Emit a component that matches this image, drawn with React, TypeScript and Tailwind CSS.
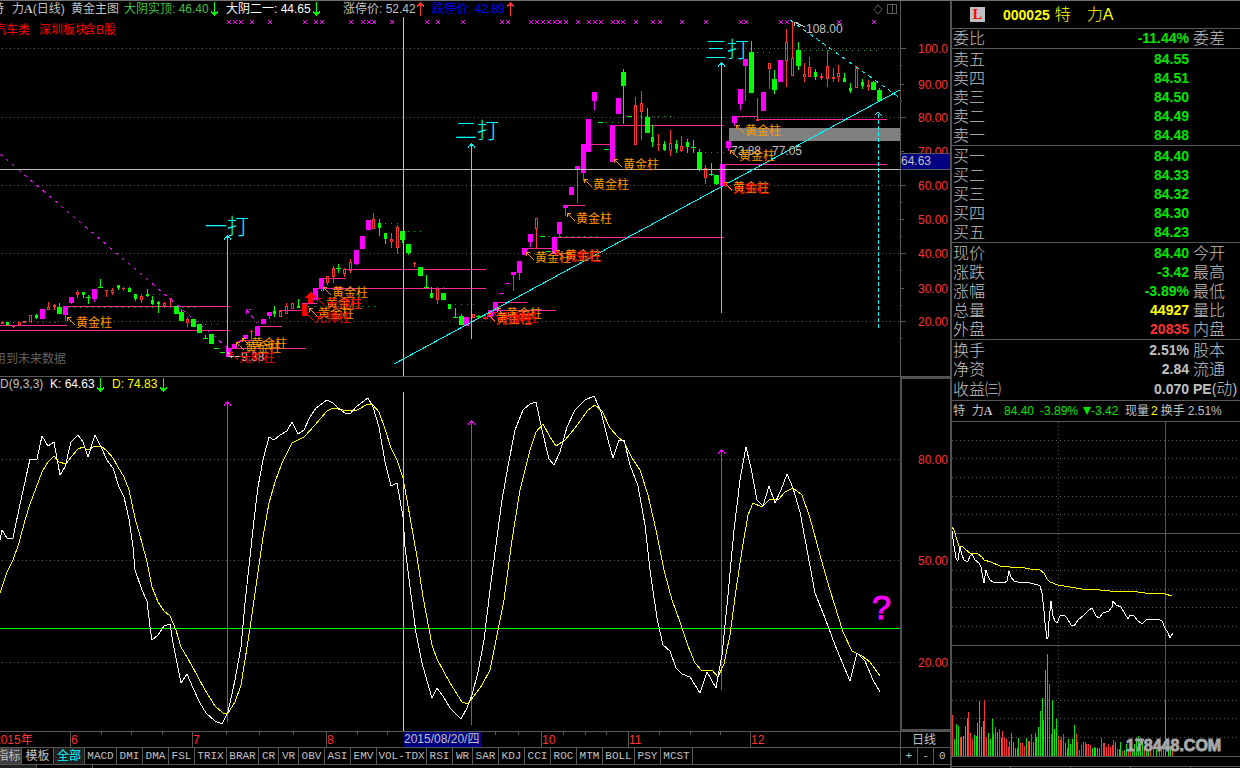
import { clsx } from "clsx";

type Kind = "up" | "down" | "gold" | "solid";
// x, high, body top, body bottom, low, kind
type Candle = [number, number, number, number, number, Kind];

const CANDLES: Candle[] = [
  [2, 322, 322, 324, 324, "up"],
  [7, 322, 322, 325, 325, "down"],
  [13, 325, 326, 327, 328, "up"],
  [19, 322, 322, 325, 325, "up"],
  [24, 321, 321, 323, 323, "up"],
  [30, 315, 315, 322, 322, "up"],
  [36, 314, 315, 318, 319, "down"],
  [42, 309, 309, 319, 319, "gold"],
  [48, 302, 307, 310, 310, "up"],
  [54, 304, 305, 307, 310, "up"],
  [59, 303, 307, 314, 314, "down"],
  [65, 306, 306, 315, 321, "gold"],
  [71, 297, 297, 303, 304, "gold"],
  [77, 290, 292, 295, 298, "up"],
  [83, 292, 292, 295, 298, "down"],
  [88, 295, 297, 298, 304, "down"],
  [94, 289, 289, 299, 302, "gold"],
  [100, 279, 287, 288, 288, "down"],
  [106, 290, 290, 291, 297, "up"],
  [112, 288, 290, 293, 295, "up"],
  [118, 285, 285, 288, 290, "down"],
  [123, 287, 288, 289, 291, "up"],
  [129, 287, 288, 292, 292, "down"],
  [135, 294, 294, 299, 301, "down"],
  [141, 295, 296, 300, 303, "up"],
  [147, 289, 294, 296, 297, "down"],
  [152, 296, 300, 304, 305, "down"],
  [158, 301, 302, 304, 313, "down"],
  [164, 302, 303, 306, 307, "up"],
  [170, 298, 298, 299, 306, "up"],
  [176, 306, 306, 314, 314, "down"],
  [181, 309, 312, 321, 321, "down"],
  [187, 317, 319, 323, 327, "up"],
  [193, 319, 319, 327, 327, "down"],
  [199, 324, 324, 333, 333, "down"],
  [205, 335, 338, 339, 339, "down"],
  [211, 334, 334, 344, 344, "down"],
  [216, 348, 348, 349, 349, "down"],
  [222, 352, 352, 353, 353, "down"],
  [228, 348, 348, 357, 357, "gold"],
  [234, 344, 344, 348, 348, "gold"],
  [240, 341, 341, 342, 342, "gold"],
  [245, 335, 335, 339, 339, "gold"],
  [251, 330, 331, 332, 340, "up"],
  [257, 326, 326, 336, 336, "gold"],
  [263, 319, 319, 324, 324, "gold"],
  [269, 312, 312, 316, 319, "gold"],
  [274, 306, 311, 314, 317, "down"],
  [280, 310, 311, 317, 317, "up"],
  [286, 303, 306, 314, 314, "up"],
  [292, 303, 303, 309, 309, "up"],
  [298, 299, 306, 308, 308, "down"],
  [304, 304, 304, 316, 316, "solid"],
  [315, 288, 288, 300, 300, "gold"],
  [321, 278, 278, 289, 291, "gold"],
  [327, 276, 276, 283, 285, "up"],
  [333, 266, 268, 277, 283, "up"],
  [338, 264, 268, 269, 273, "down"],
  [344, 268, 269, 274, 277, "up"],
  [350, 259, 262, 271, 273, "up"],
  [356, 250, 250, 264, 265, "gold"],
  [362, 236, 236, 249, 249, "gold"],
  [368, 220, 220, 230, 230, "gold"],
  [373, 213, 219, 229, 229, "up"],
  [379, 219, 223, 228, 236, "down"],
  [385, 233, 233, 239, 244, "down"],
  [391, 233, 239, 242, 248, "up"],
  [397, 225, 227, 248, 254, "up"],
  [402, 231, 231, 240, 243, "down"],
  [408, 244, 244, 253, 255, "down"],
  [414, 262, 263, 264, 267, "up"],
  [420, 267, 267, 276, 276, "down"],
  [426, 275, 287, 288, 288, "down"],
  [431, 287, 293, 298, 298, "down"],
  [437, 287, 289, 300, 304, "up"],
  [443, 293, 293, 300, 300, "down"],
  [449, 304, 304, 309, 309, "down"],
  [455, 308, 317, 318, 318, "down"],
  [461, 314, 316, 325, 325, "down"],
  [466, 317, 317, 326, 326, "gold"],
  [473, 314, 314, 318, 318, "up"],
  [478, 315, 316, 317, 319, "down"],
  [485, 314, 317, 319, 320, "solid"],
  [490, 310, 310, 317, 317, "gold"],
  [495, 302, 302, 311, 311, "gold"],
  [501, 293, 293, 294, 295, "gold"],
  [507, 283, 283, 284, 284, "gold"],
  [513, 272, 272, 275, 291, "gold"],
  [519, 261, 261, 273, 280, "gold"],
  [524, 248, 248, 255, 255, "gold"],
  [530, 234, 234, 242, 247, "gold"],
  [536, 218, 218, 229, 249, "up"],
  [542, 236, 236, 237, 237, "down"],
  [548, 251, 251, 252, 252, "down"],
  [554, 237, 237, 254, 254, "gold"],
  [559, 222, 222, 234, 237, "gold"],
  [565, 205, 205, 208, 216, "gold"],
  [571, 187, 187, 195, 195, "gold"],
  [577, 166, 166, 169, 203, "gold"],
  [583, 144, 144, 173, 181, "gold"],
  [588, 119, 119, 152, 152, "gold"],
  [594, 92, 92, 101, 110, "gold"],
  [600, 122, 122, 123, 123, "down"],
  [606, 149, 149, 150, 150, "down"],
  [612, 125, 125, 162, 162, "gold"],
  [618, 98, 98, 114, 114, "gold"],
  [623, 69, 72, 86, 124, "down"],
  [629, 116, 116, 117, 117, "down"],
  [635, 97, 105, 145, 145, "up"],
  [641, 91, 103, 112, 140, "up"],
  [647, 108, 117, 133, 133, "down"],
  [652, 125, 137, 142, 147, "down"],
  [658, 134, 144, 145, 151, "up"],
  [664, 141, 144, 150, 151, "down"],
  [670, 130, 143, 151, 156, "up"],
  [676, 140, 144, 149, 153, "down"],
  [681, 136, 146, 151, 152, "up"],
  [687, 139, 142, 147, 153, "down"],
  [693, 140, 147, 148, 153, "down"],
  [699, 149, 152, 170, 171, "down"],
  [705, 165, 168, 178, 184, "up"],
  [711, 163, 174, 175, 176, "down"],
  [716, 175, 175, 184, 185, "down"],
  [722, 164, 164, 186, 186, "gold"],
  [728, 141, 141, 148, 151, "gold"],
  [734, 116, 116, 123, 126, "gold"],
  [740, 89, 89, 104, 110, "gold"],
  [745, 59, 59, 66, 101, "gold"],
  [751, 41, 52, 93, 93, "down"],
  [757, 98, 119, 121, 121, "up"],
  [763, 92, 92, 111, 111, "gold"],
  [769, 63, 63, 69, 89, "up"],
  [774, 70, 79, 90, 94, "down"],
  [780, 60, 60, 82, 82, "gold"],
  [786, 29, 42, 61, 87, "up"],
  [792, 22, 58, 76, 76, "up"],
  [798, 42, 50, 66, 70, "down"],
  [804, 63, 74, 77, 82, "up"],
  [809, 57, 67, 77, 77, "up"],
  [815, 69, 72, 77, 80, "down"],
  [821, 73, 76, 78, 80, "up"],
  [827, 50, 66, 79, 87, "up"],
  [833, 68, 77, 79, 82, "up"],
  [838, 65, 73, 77, 82, "up"],
  [844, 73, 78, 82, 82, "down"],
  [850, 83, 88, 91, 93, "down"],
  [856, 66, 68, 88, 88, "up"],
  [862, 79, 82, 86, 89, "down"],
  [868, 80, 85, 87, 91, "up"],
  [873, 81, 82, 90, 90, "down"],
  [879, 88, 90, 101, 102, "down"],
];

// y, x from, x to
const GOLD_LEVELS = [
  [306, 65, 230], [325, 0, 67], [330, 0, 230], [348, 228, 306], [326, 257, 282],
  [310, 279, 302], [303, 302, 317], [340, 240, 262], [278, 321, 346],
  [288, 315, 486], [269, 344, 486], [248, 524, 554], [237, 554, 724],
  [205, 565, 585], [302, 495, 527], [310, 490, 556], [144, 588, 612],
  [125, 612, 724], [116, 734, 758], [119, 757, 887], [164, 722, 887],
];

const GREEN_LEVELS = [
  [307, 68, 195], [322, 7, 56], [294, 141, 172], [324, 199, 218], [223, 385, 400],
  [231, 408, 422], [306, 308, 376], [287, 431, 445], [304, 455, 474],
  [236, 548, 598], [116, 640, 672], [122, 606, 620], [152, 705, 725],
  [52, 757, 771], [50, 804, 882],
];

const CROSS_MARKS = [
  229, 235, 241, 252, 270, 305, 316, 322, 351, 363, 369, 374, 392, 427, 438,
  463, 502, 508, 531, 537, 543, 549, 555, 560, 566, 578, 589, 595, 601, 613,
  618, 623, 636, 653, 660, 682, 706, 741, 746, 781, 787, 839, 874,
];

const GOLD_LABELS = [
  [77, 322], [252, 343], [246, 347], [333, 292], [327, 303], [319, 313],
  [507, 313], [497, 318], [536, 257], [566, 255], [577, 218], [594, 184],
  [624, 164], [746, 130], [740, 155], [734, 187],
];

const MARSHAL_LABELS = [
  [240, 357], [327, 303], [315, 317], [497, 319], [503, 317], [566, 256], [734, 188],
];

const PRICE_TICKS: [string, number][] = [
  ["100.0", 48], ["90.00", 84], ["80.00", 117], ["70.00", 151], ["60.00", 185],
  ["50.00", 219], ["40.00", 253], ["30.00", 288], ["20.00", 321],
];

const K_LINE =
  "0,540 2,530 7,538 13,538 19,509 30,459 37,459 42,436 48,446 54,442 60,475 65,467 71,442 78,435 83,442 88,457 95,435 101,447 107,460 113,468 119,487 124,497 129,519 133,547 135,570 142,590 147,601 150,627 152,640 158,635 164,626 170,624 173,643 181,683 187,674 193,688 200,703 206,713 215,721 222,724 228,712 235,680 241,647 245,603 250,557 254,520 258,487 263,460 269,437 274,440 280,435 287,431 292,422 298,434 304,430 310,417 316,408 327,400 333,403 338,408 345,413 350,414 357,406 368,398 373,407 379,427 385,462 391,486 397,483 403,517 405,547 410,587 416,633 422,663 432,698 437,688 443,696 450,708 461,719 467,708 472,695 478,672 484,640 490,590 496,545 502,500 508,466 515,430 523,410 530,404 536,402 542,430 549,459 554,465 560,452 567,427 575,410 585,400 594,396 601,412 608,440 613,458 619,440 624,440 630,465 638,486 645,525 650,570 657,618 663,645 670,651 676,668 682,674 690,677 700,693 707,672 716,688 722,655 728,595 734,530 740,480 746,447 751,468 757,500 763,506 769,486 775,503 781,490 787,474 793,488 800,512 808,555 815,593 825,618 835,645 850,681 857,653 865,661 873,680 880,692";

const D_LINE =
  "0,593 7,572 13,560 19,543 25,520 30,504 42,472 48,462 54,456 59,462 66,464 72,456 78,449 83,447 88,450 95,446 101,446 107,451 113,458 118,467 124,477 129,490 135,518 142,543 147,562 152,587 158,602 164,611 170,616 176,630 181,647 187,657 197,675 205,690 215,706 223,713 228,713 235,702 241,685 245,660 250,628 254,600 259,565 263,537 269,503 275,482 282,463 292,443 304,437 315,425 327,411 333,408 348,411 357,410 368,404 373,405 379,412 385,429 391,448 397,460 403,478 410,517 417,557 423,597 432,645 437,659 450,683 462,702 468,704 474,696 482,685 490,670 496,640 504,600 512,540 520,490 530,450 536,432 543,424 550,437 556,446 565,440 575,428 588,410 595,405 602,411 610,428 618,437 624,442 632,458 640,470 648,495 656,530 664,570 672,600 680,622 688,646 695,663 702,671 712,670 718,677 724,664 730,635 736,590 742,550 748,515 753,503 762,507 770,499 778,500 785,492 793,488 802,495 810,518 820,555 830,590 843,632 852,651 862,656 870,662 880,676";

const TICK_LINE =
  "952,530 954,545 956,557 957,559 958,559 960,546 962,554 964,559 966,560 968,560 970,555 972,553 975,559 979,562 981,566 983,577 984,582 986,569 988,575 990,579 993,581 1004,582 1007,580 1009,570 1011,576 1014,580 1018,581 1030,582 1038,584 1040,585 1042,592 1044,610 1045,622 1047,638 1048,636 1049,620 1051,600 1053,615 1055,620 1057,622 1060,615 1064,614 1067,617 1071,624 1074,625 1078,619 1084,614 1088,610 1092,607 1096,615 1099,617 1103,612 1109,610 1112,606 1113,600 1116,604 1121,606 1125,613 1128,618 1130,614 1134,615 1138,620 1142,623 1147,618 1158,618 1162,620 1165,627 1168,632 1170,637 1173,632";

const AVG_LINE =
  "952,526 954,529 957,539 959,545 963,546 966,549 970,552 978,553 982,556 984,559 991,561 1000,565 1010,566 1020,566 1030,568 1040,569 1044,572 1047,578 1050,581 1058,584 1070,586 1082,588 1100,589 1110,590 1130,590 1145,592 1165,593 1172,595";

// x, height, r = buy side, g = sell side
const VOLUMES: [number, number, "r" | "g"][] = [
  [952, 41, "r"], [954, 17, "g"], [956, 32, "g"], [958, 30, "g"], [960, 19, "r"],
  [961, 19, "g"], [963, 20, "g"], [965, 30, "g"], [967, 38, "g"], [968, 44, "r"],
  [970, 23, "r"], [972, 17, "r"], [974, 21, "g"], [976, 20, "g"], [977, 33, "g"],
  [979, 55, "g"], [981, 29, "g"], [983, 35, "g"], [984, 56, "r"], [986, 19, "r"],
  [988, 23, "g"], [990, 17, "g"], [992, 37, "g"], [993, 22, "g"], [995, 29, "r"],
  [997, 24, "g"], [999, 27, "r"], [1001, 18, "g"], [1002, 25, "r"], [1004, 19, "r"],
  [1006, 17, "r"], [1008, 9, "r"], [1009, 15, "r"], [1011, 23, "g"], [1013, 14, "g"],
  [1015, 8, "g"], [1017, 8, "g"], [1018, 18, "g"], [1020, 13, "r"], [1022, 13, "r"],
  [1024, 10, "r"], [1026, 18, "g"], [1028, 15, "r"], [1029, 15, "g"], [1031, 22, "r"],
  [1033, 14, "g"], [1035, 23, "g"], [1036, 19, "g"], [1038, 29, "g"], [1040, 45, "g"],
  [1042, 58, "g"], [1043, 36, "g"], [1045, 86, "g"], [1047, 102, "g"], [1049, 72, "r"],
  [1051, 22, "r"], [1052, 56, "g"], [1054, 27, "g"], [1056, 37, "g"], [1058, 20, "r"],
  [1060, 16, "r"], [1061, 19, "r"], [1063, 22, "r"], [1065, 13, "g"], [1067, 8, "g"],
  [1068, 17, "g"], [1070, 12, "g"], [1072, 17, "g"], [1074, 31, "g"], [1076, 22, "r"],
  [1077, 14, "r"], [1079, 6, "r"], [1081, 11, "r"], [1083, 14, "r"], [1085, 14, "r"],
  [1086, 12, "r"], [1088, 12, "r"], [1090, 11, "r"], [1092, 8, "g"], [1094, 9, "g"],
  [1095, 8, "g"], [1097, 8, "g"], [1099, 8, "g"], [1101, 18, "r"], [1103, 13, "r"],
  [1104, 13, "r"], [1106, 9, "r"], [1108, 12, "r"], [1110, 9, "r"], [1112, 11, "r"],
  [1113, 16, "r"], [1115, 14, "g"], [1117, 7, "r"], [1119, 7, "g"], [1120, 14, "g"],
  [1122, 5, "r"], [1124, 6, "g"], [1126, 12, "g"], [1128, 7, "r"], [1130, 5, "r"],
  [1132, 8, "g"], [1134, 12, "g"], [1136, 18, "g"], [1138, 20, "g"], [1140, 14, "g"],
  [1142, 16, "g"], [1144, 9, "r"], [1146, 10, "g"], [1148, 6, "g"], [1150, 8, "r"],
  [1153, 7, "r"], [1156, 6, "g"], [1159, 9, "r"], [1161, 10, "r"], [1163, 8, "r"],
  [1165, 56, "g"], [1168, 8, "g"], [1170, 10, "g"], [1172, 5, "r"],
];

interface Quote {
  label: string;
  value: string;
  color: string;
  side?: string;
}

const GREEN = "text-[#00e600]";
const SILVER = "text-[#c0c0c0]";

const QUOTE_GROUPS: Quote[][] = [
  [{ label: "委比", value: "-11.44%", color: GREEN, side: "委差" }],
  [
    { label: "卖五", value: "84.55", color: GREEN },
    { label: "卖四", value: "84.51", color: GREEN },
    { label: "卖三", value: "84.50", color: GREEN },
    { label: "卖二", value: "84.49", color: GREEN },
    { label: "卖一", value: "84.48", color: GREEN },
  ],
  [
    { label: "买一", value: "84.40", color: GREEN },
    { label: "买二", value: "84.33", color: GREEN },
    { label: "买三", value: "84.32", color: GREEN },
    { label: "买四", value: "84.30", color: GREEN },
    { label: "买五", value: "84.23", color: GREEN },
  ],
  [
    { label: "现价", value: "84.40", color: GREEN, side: "今开" },
    { label: "涨跌", value: "-3.42", color: GREEN, side: "最高" },
    { label: "涨幅", value: "-3.89%", color: GREEN, side: "最低" },
    { label: "总量", value: "44927", color: "text-[#ffff00]", side: "量比" },
    { label: "外盘", value: "20835", color: "text-[#ff3232]", side: "内盘" },
  ],
  [
    { label: "换手", value: "2.51%", color: SILVER, side: "股本" },
    { label: "净资", value: "2.84", color: SILVER, side: "流通" },
    { label: "收益㈢", value: "0.070", color: SILVER, side: "PE(动)" },
  ],
];

const TABS = [
  "MACD", "DMI", "DMA", "FSL", "TRIX", "BRAR", "CR", "VR", "OBV", "ASI", "EMV",
  "VOL-TDX", "RSI", "WR", "SAR", "KDJ", "CCI", "ROC", "MTM", "BOLL", "PSY", "MCST",
];

const TAB_WIDTH: Record<number, string> = {
  2: "w-5",
  3: "w-[26px]",
  4: "w-8",
  7: "w-[50px]",
};

function Arrow({ up, className }: { up?: boolean; className: string }) {
  return (
    <svg
      viewBox="0 0 7 14"
      shapeRendering="crispEdges"
      className={clsx("h-[14px] w-[7px] shrink-0 fill-current", className)}
    >
      {up ? (
        <path d="M3 0h1v1h1v1h1v1h1v2h-1v-1h-2v10h-1v-10h-2v1h-1v-2h1v-1h1v-1h1z" />
      ) : (
        <path d="M3 0h1v10h2v-1h1v2h-1v1h-1v1h-1v1h-1v-1h-1v-1h-1v-1h-1v-2h1v1h2z" />
      )}
    </svg>
  );
}

function CandleBar({ candle }: { candle: Candle }) {
  const [x, high, top, bottom, low, kind] = candle;
  const height = Math.max(bottom - top, 1);
  if (kind === "up") {
    return (
      <g fill="#ff3232">
        <rect x={x} y={high} width={1} height={Math.max(top - high, 0)} />
        <rect x={x} y={bottom} width={1} height={Math.max(low - bottom, 0)} />
        <path
          fillRule="evenodd"
          d={
            height > 2
              ? `M${x - 1} ${top}h3v${height}h-3z M${x} ${top + 1}h1v${height - 2}h-1z`
              : `M${x - 1} ${top}h3v${height}h-3z`
          }
        />
      </g>
    );
  }
  const color = { gold: "#ff00ff", down: "#00ff00", solid: "#ff0000" }[kind];
  const half = kind === "down" && height < 7 && height > 1 ? 1 : 2;
  return (
    <g fill={color}>
      <rect x={x} y={high} width={1} height={low - high} />
      <rect x={x - half} y={top} width={half * 2 + 1} height={height} />
    </g>
  );
}

function Pointer({ x, y, color }: { x: number; y: number; color: string }) {
  return (
    <path
      d={`M${x - 2} ${y + 3}L${x - 10} ${y - 5}M${x - 10} ${y - 1}V${y - 5}H${x - 6}`}
      stroke={color}
      fill="none"
    />
  );
}

function UpMarker({ x, top, bottom, color }: { x: number; top: number; bottom: number; color: string }) {
  return (
    <g fill={color}>
      <rect x={x} y={top} width={1} height={bottom - top} />
      <rect x={x - 1} y={top + 1} width={3} height={1} />
      <path
        d={`M${x - 2} ${top + 2}h2v1h-2z M${x + 1} ${top + 2}h2v1h-2z M${x - 3} ${top + 3}h1v2h-1z M${x + 3} ${top + 3}h1v2h-1z`}
      />
    </g>
  );
}

function PriceChart() {
  return (
    <svg viewBox="0 17 950 360" className="block h-auto w-full" shapeRendering="crispEdges">
      <g stroke="#585858" strokeDasharray="1 3">
        {[48, 117, 185, 253, 321].map((y) => (
          <path key={y} d={`M2 ${y}H900`} />
        ))}
      </g>

      {/* gap zone */}
      <rect x={729} y={128} width={171} height={13} fill="#808080" />

      <g stroke="#ff2890">
        {GOLD_LEVELS.map(([y, from, to]) => (
          <path key={`${y}-${from}`} d={`M${from} ${y}H${to}`} />
        ))}
      </g>
      <g stroke="#00b000" strokeDasharray="1 5">
        {GREEN_LEVELS.map(([y, from, to]) => (
          <path key={`${y}-${from}`} d={`M${from} ${y}H${to}`} />
        ))}
      </g>

      {CANDLES.map((c) => (
        <CandleBar key={c[0]} candle={c} />
      ))}

      <g stroke="#ff00ff">
        {CROSS_MARKS.map((x) => (
          <path key={x} d={`M${x - 2} 20l4 4M${x + 2} 20l-4 4`} />
        ))}
        <path d="M0 154L230 350" strokeDasharray="3 5" />
        <path d="M246 309L257 323M246 314v-5h5" strokeDasharray="5 3" fill="none" />
      </g>

      <path d="M308 303v-5h-3v-1l5-5h1l5 5v1h-3v5z" fill="#ff0000" />

      {/* crosshair */}
      <path d="M0 169H900M403 17V376" stroke="#c0c0c0" />

      <g stroke="#00ffff" fill="none">
        <path d="M394 364L900 90" />
        <path d="M790 20L900 98" strokeDasharray="4 4" />
        <path d="M878 114V330" strokeDasharray="4 2" />
        <path d="M875 115l3 -3l4 4" />
      </g>
      <UpMarker x={227} top={235} bottom={356} color="#00ffff" />
      <UpMarker x={471} top={143} bottom={339} color="#00ffff" />
      <UpMarker x={721} top={62} bottom={313} color="#00ffff" />

      <g fontSize="22" fill="#00ffff" className="font-light">
        <text x="205" y="234">一打</text>
        <text x="455" y="138">二打</text>
        <text x="705" y="57">三打</text>
      </g>

      <g fontSize="12">
        <g fill="#c0c0c0">
          <path d="M805 27L794 22M794 26v-4h4" stroke="#c0c0c0" fill="none" />
          <text x="806" y="33">108.00</text>
          <text x="731" y="155">73.88</text>
          <text x="772" y="155">77.05</text>
          <text x="241" y="361">9.38</text>
          <path d="M228 356H240M228 352l4 6" stroke="#c0c0c0" fill="none" />
        </g>
        {GOLD_LABELS.map(([x, y]) => (
          <g key={`${x}-${y}`}>
            <Pointer x={x} y={y} color="#ff9600" />
            <text x={x - 1} y={y + 5} fill="#ff9600">黄金柱</text>
          </g>
        ))}
        {MARSHAL_LABELS.map(([x, y]) => (
          <g key={`${x}-${y}`}>
            <Pointer x={x} y={y} color="#ff0000" />
            <text x={x - 1} y={y + 5} fill="#ff0000">元帅柱</text>
          </g>
        ))}
        <text x="-6" y="34" fill="#ff0000">汽车类</text>
        <text x="39" y="34" fill="#ff0000">深圳板块</text>
        <text x="84" y="34" fill="#ff0000">含B股</text>
        <text x="-6" y="363" fill="#606060">用到未来数据</text>
      </g>

      {/* price axis */}
      <g stroke="#585858">
        <path d="M900 17V376M0 376H950" />
        {PRICE_TICKS.map(([label, y], i) => (
          <path key={label} d={`M900 ${y}h${i % 2 ? 4 : 6}M900 ${y + 17}h2`} />
        ))}
      </g>
      <g fontSize="12" fill="#ff3232" textAnchor="end">
        {PRICE_TICKS.map(([label, y]) => (
          <text key={label} x="948" y={y + 5}>{label}</text>
        ))}
      </g>
      <rect x={901} y={154} width={49} height={15} fill="#000080" />
      <path d="M901 153H950M901 169H950" stroke="#585858" />
      <text x="901" y="165" fontSize="12" fill="#c0c0c0">64.63</text>
    </svg>
  );
}

function KdChart() {
  return (
    <svg viewBox="0 392 950 340" className="block h-auto w-full" shapeRendering="crispEdges">
      <g stroke="#585858" strokeDasharray="1 3">
        {[459, 560, 662].map((y) => (
          <path key={y} d={`M2 ${y}H900`} />
        ))}
      </g>
      <path d="M403 392V731" stroke="#c0c0c0" />
      <path d="M0 628H900" stroke="#00ff00" />
      <UpMarker x={227} top={401} bottom={722} color="#ff00ff" />
      <UpMarker x={471} top={420} bottom={725} color="#ff00ff" />
      <UpMarker x={721} top={449} bottom={690} color="#ff00ff" />
      <g fill="none">
        <polyline points={D_LINE} stroke="#ffff00" />
        <polyline points={K_LINE} stroke="#ffffff" />
      </g>
      <text x="872" y="619" fontSize="34" fill="#ff00ff" stroke="#ff00ff">?</text>
      <path d="M901 392V730H950" fill="none" stroke="#505050" strokeWidth={2} />
      <path d="M0 731H950" stroke="#585858" />
      <g fontSize="12" fill="#ff3232" textAnchor="end">
        <text x="948" y="464">80.00</text>
        <text x="948" y="565">50.00</text>
        <text x="948" y="667">20.00</text>
      </g>
    </svg>
  );
}

function DateAxis() {
  return (
    <svg viewBox="0 732 950 16" className="block h-auto w-full" shapeRendering="crispEdges">
      <g stroke="#585858">
        {[101, 131, 162, 226, 259, 293, 357, 387, 495, 518, 563, 585, 606, 659, 690, 720].map((x) => (
          <path key={x} d={`M${x} 732v3`} />
        ))}
        {[70, 192, 326, 541, 628, 750, 900].map((x) => (
          <path key={x} d={`M${x} 732v16`} />
        ))}
        <path d="M0 747H950" />
      </g>
      <rect x={404} y={732} width={78} height={15} fill="#000080" />
      <g fontSize="12" fill="#ff3232">
        <text x="-6" y="744">2015年</text>
        <text x="71" y="744">6</text>
        <text x="193" y="744">7</text>
        <text x="327" y="744">8</text>
        <text x="542" y="744">10</text>
        <text x="629" y="744">11</text>
        <text x="751" y="744">12</text>
        <text x="404" y="743" fill="#c0c0c0">2015/08/20/四</text>
        <text x="912" y="744" fill="#c0c0c0">日线</text>
      </g>
    </svg>
  );
}

function IntradayChart() {
  const rows = [439, 457, 476, 495, 513, 550, 569, 588, 606, 625, 661, 680, 699, 717, 736];
  return (
    <svg viewBox="952 421 288 347" className="block h-auto w-full" shapeRendering="crispEdges">
      <g stroke="#585858" strokeDasharray="1 3">
        {rows.map((y) => (
          <path key={y} d={`M952 ${y}H1240`} />
        ))}
        <path d="M1058 421V755" />
      </g>
      <path
        d="M952 532H1240M952 644H1240M952 755H1240M952 765H1240M1165 421V755M1010 766v2M1070 766v2M1130 766v2M1190 766v2"
        stroke="#585858"
      />
      {VOLUMES.map(([x, h, side]) => (
        <rect key={x} x={x} y={755 - h} width={1} height={h} fill={side === "r" ? "#ff3232" : "#00e600"} />
      ))}
      <g fill="none">
        <polyline points={AVG_LINE} stroke="#ffff00" />
        <polyline points={TICK_LINE} stroke="#ffffff" />
      </g>
      <text x="1126" y="750" fontSize="16" fill="#b0b0b0" stroke="#a0a0a0" className="font-bold">
        178448.COM
      </text>
    </svg>
  );
}

function ChartHeader() {
  return (
    <div className="flex h-4 items-center overflow-hidden whitespace-nowrap text-xs leading-4 text-[#c0c0c0]">
      <span className="-ml-2 w-3">特</span>
      <span className="ml-2 w-[51px]">
        力<b className="font-['Liberation_Serif',serif]">A</b>(日线)
      </span>
      <span className="ml-2">黄金主图</span>
      <span className="ml-[5px] w-[87px] text-[#40c040]">大阴实顶: 46.40</span>
      <Arrow className="text-[#00ff00]" />
      <span className="ml-2 w-[86px] text-white">大阴二一: 44.65</span>
      <Arrow className="ml-px text-[#00ff00]" />
      <span className="ml-[23px] w-[74px]">涨停价: 52.42</span>
      <Arrow up className="text-[#ff3232]" />
      <span className="ml-2 w-[75px] text-[#0000ff]">跌停价: 42.89</span>
      <Arrow up className="text-[#ff3232]" />
      <div className="ml-auto flex h-4 items-center gap-1 pr-[2px]">
        <svg viewBox="0 0 10 11" className="h-[11px] w-[10px]" fill="none" stroke="#606060">
          <path d="M5 1L9 5.500L5 10L1 5.500Z" />
        </svg>
        <svg viewBox="0 0 11 11" className="h-[11px] w-[11px]" fill="#606060" shapeRendering="crispEdges">
          <path fillRule="evenodd" d="M0 0H10V10H0ZM1 1V9H5V1ZM6 1V9H9V1Z" />
        </svg>
      </div>
      <div className="h-4 w-[50px] shrink-0 border-l border-[#585858]" />
    </div>
  );
}

function KdHeader() {
  return (
    <div className="flex h-[15px] items-center overflow-hidden whitespace-nowrap text-xs leading-[15px]">
      <span className="-ml-2 w-[58px] text-[#c0c0c0]">KD(9,3,3)</span>
      <span className="w-[47px] text-white">K: 64.63</span>
      <Arrow className="text-[#00ff00]" />
      <span className="ml-2 w-12 text-[#ffff00]">D: 74.83</span>
      <Arrow className="text-[#00ff00]" />
      <div className="ml-auto h-[15px] w-[50px] shrink-0 border-t-2 border-l-2 border-[#505050]" />
    </div>
  );
}

function TabBar() {
  return (
    <div className="flex h-[17px] border-b border-[#585858] text-xs leading-4 text-[#c0c0c0]">
      <button className="w-[22px] overflow-hidden border-r border-[#585858] bg-[#404040]">
        <span className="-ml-1 whitespace-nowrap">指标</span>
      </button>
      <button className="w-8 border-r border-[#585858]">模板</button>
      <button className="w-[31px] border-r border-[#585858] bg-[#202020] text-[#00ffff]">全部</button>
      <div className="flex flex-1 font-['Liberation_Mono',monospace] text-[11px]">
        {TABS.map((tab) => (
          <button
            key={tab}
            className={clsx("shrink-0 border-r border-[#585858] text-center", TAB_WIDTH[tab.length])}
          >
            {tab}
          </button>
        ))}
      </div>
      <div className="flex w-[50px] font-['Liberation_Mono',monospace] text-[11px]">
        <button className="flex-1 border-l border-[#585858]">+</button>
        <button className="flex-1 border-l border-[#585858]">-</button>
        <button className="flex-1 border-l border-[#585858]">0</button>
      </div>
    </div>
  );
}

function QuotePanel() {
  return (
    <aside className="w-[290px] shrink-0 border-l-2 border-[#505050]">
      <h1 className="flex h-[27px] items-center text-base font-light text-[#ffff00]">
        <span className="ml-[18px] flex h-[15px] w-[15px] items-center justify-center bg-[#c0c0c0] font-['Liberation_Serif',serif] text-sm font-bold text-[#ff0000]">
          L
        </span>
        <span className="ml-[18px] text-sm font-bold">000025</span>
        <span className="ml-[5px]">特　力A</span>
      </h1>
      {QUOTE_GROUPS.map((group, i) => (
        <div key={group[0].label} className={clsx("border-t border-[#585858]", i > 0 && "pt-px", i === 4 && "pb-px")}>
          <table className="w-full table-fixed">
            <tbody>
              {group.map((q) => (
                <tr key={q.label} className="h-[19px] text-base leading-[19px] text-[#c0c0c0]">
                  <th scope="row" className="w-[60px] p-0 pl-px text-left font-light whitespace-nowrap">
                    {q.label}
                  </th>
                  <td className={clsx("p-0 pr-1 text-right text-sm leading-[19px] font-bold", q.color)}>{q.value}</td>
                  <td className="w-[47px] p-0 font-light whitespace-nowrap">
                    {q.side === "PE(动)" ? (
                      <span className="text-sm leading-[19px]">
                        <span className="font-bold">PE</span>(<span className="text-base leading-[19px]">动</span>)
                      </span>
                    ) : (
                      q.side
                    )}
                  </td>
                </tr>
              ))}
            </tbody>
          </table>
        </div>
      ))}
      <div className="flex h-[22px] items-center border-y border-[#585858] pl-px text-xs whitespace-nowrap text-[#c0c0c0]">
        <span className="w-[51px]">
          特 &nbsp;力<b className="font-['Liberation_Serif',serif]">A</b>
        </span>
        <span className="w-9 text-[#00e600]">84.40</span>
        <span className="w-[43px] text-[#00e600]">-3.89%</span>
        <svg viewBox="0 0 8 8" className="h-2 w-2 fill-[#00e600]">
          <path d="M0 0h8L4 8z" />
        </svg>
        <span className="w-[34px] text-[#00e600]">-3.42</span>
        <span>现量</span>
        <span className="ml-[2px] text-[#ffff00]">2</span>
        <span className="ml-[3px]">换手</span>
        <span className="ml-[3px]">2.51%</span>
      </div>
      <IntradayChart />
    </aside>
  );
}

export default function App() {
  return (
    <main className="flex min-h-screen w-full overflow-hidden border-t border-[#707070] bg-black font-['Liberation_Sans','Noto_Sans_CJK_SC',sans-serif]">
      <section className="min-w-0 flex-1">
        <ChartHeader />
        <PriceChart />
        <KdHeader />
        <KdChart />
        <DateAxis />
        <TabBar />
        <div className="flex h-[3px]">
          <div className="w-[37px] border-r border-[#585858] bg-[#202020]" />
          <div className="w-14 border-r border-[#585858]" />
        </div>
      </section>
      <QuotePanel />
    </main>
  );
}
